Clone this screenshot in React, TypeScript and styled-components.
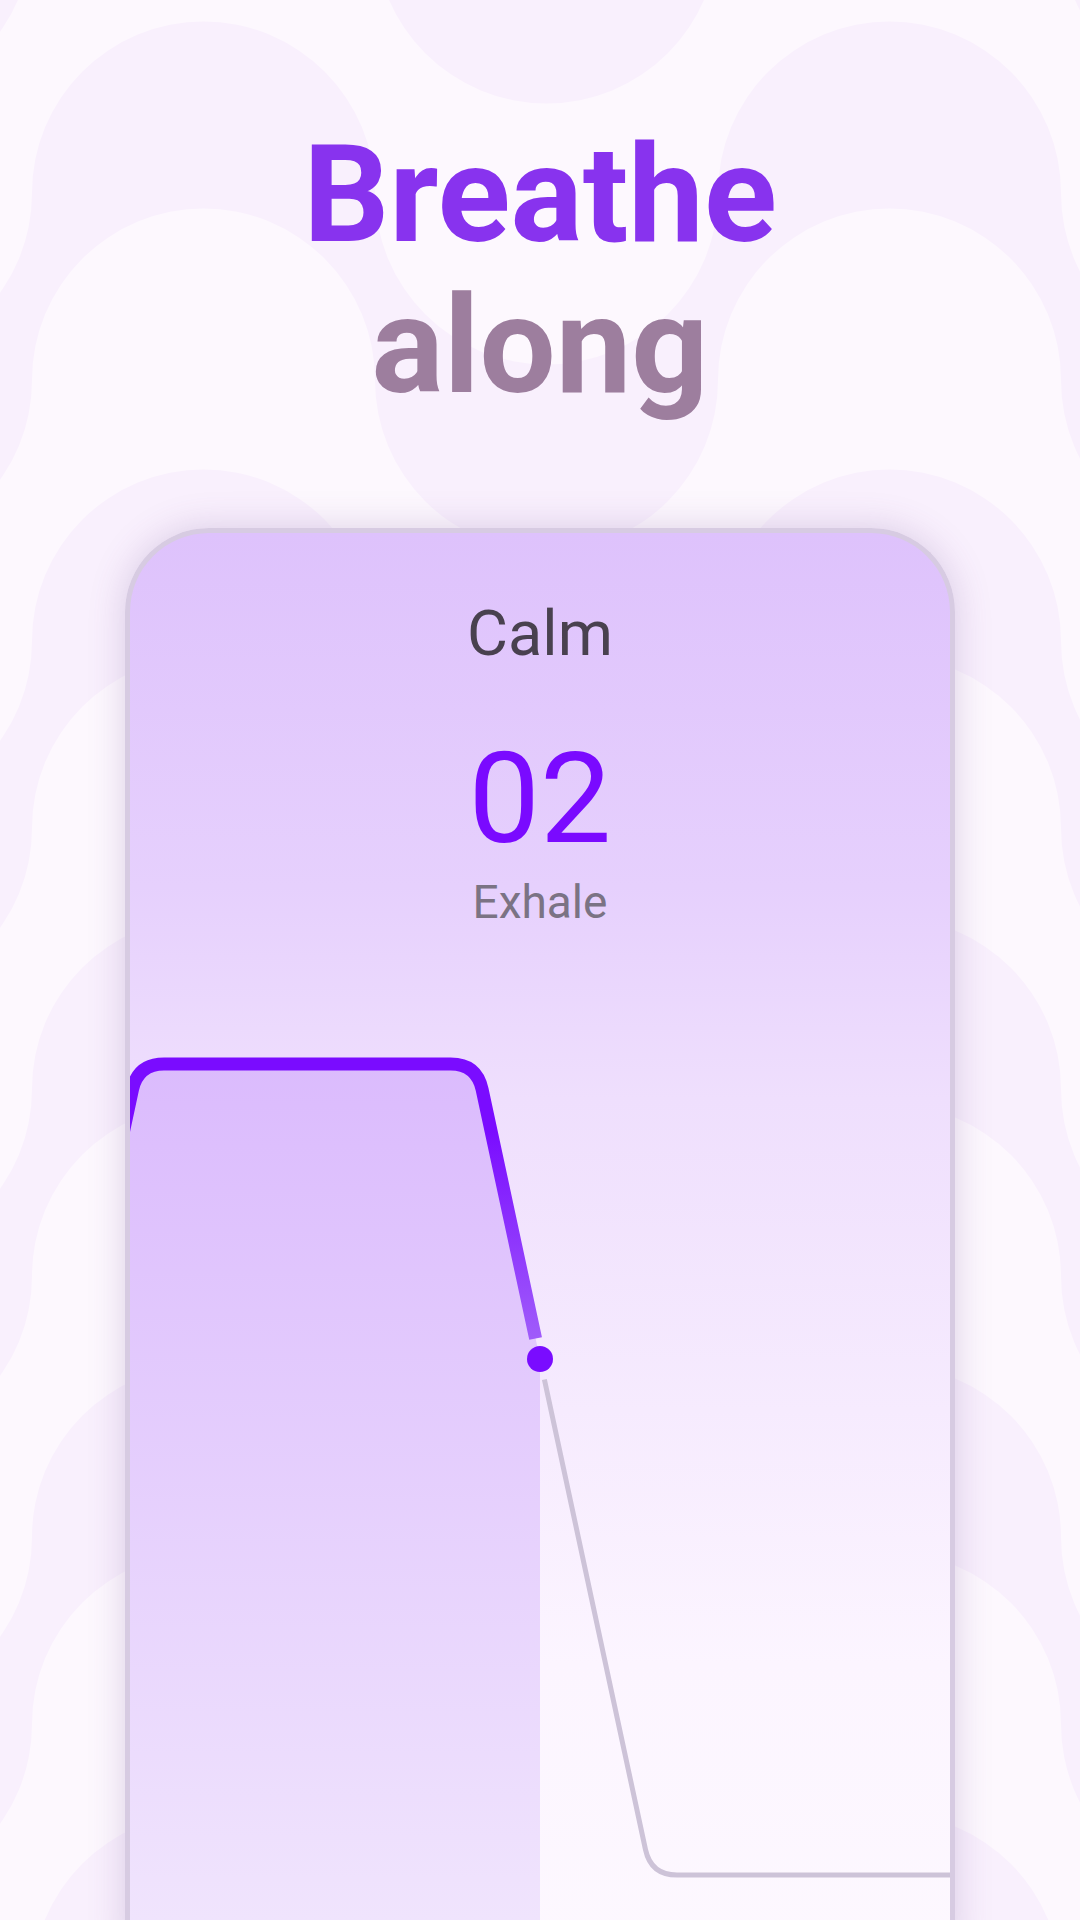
import styled, { createGlobalStyle } from 'styled-components'

const GlobalStyle = createGlobalStyle`
  html, body {
    margin: 0;
    padding: 0;
  }
  body {
    background: #fdf8fe;
    font-family: Roboto, 'Noto Sans', sans-serif;
  }
`

const Page = styled.main`
  position: relative;
  width: 1080px;
  height: 1920px;
  overflow: hidden;
  background: #fdf8fe;
`

const Backdrop = styled.svg`
  position: absolute;
  inset: 0;
  width: 100%;
  height: 100%;
`

const Content = styled.div`
  position: relative;
  z-index: 1;
  display: flex;
  flex-direction: column;
  align-items: center;
  padding-top: 120px;
`

const Title = styled.h1`
  margin: 0;
  font-size: 135px;
  line-height: 151px;
  font-weight: 700;
  text-align: center;
`

const TitleLine = styled.span<{ $tone: 'accent' | 'muted' }>`
  display: block;
  color: ${p => (p.$tone === 'accent' ? '#8833ee' : '#9d7e9e')};
`

const Card = styled.section`
  margin-top: 106px;
  width: 830px;
  height: 1420px;
  flex-shrink: 0;
  box-sizing: border-box;
  border: 5px solid #d7cbe2;
  border-bottom: none;
  border-radius: 84px 84px 0 0;
  background: linear-gradient(
    180deg,
    #dec2fc 0%,
    #e6d0fd 25%,
    #efdffd 40%,
    #f6ebfe 62%,
    #fcf5ff 80%,
    #fdf8ff 100%
  );
  box-shadow: 0 0 36px rgba(105, 70, 140, 0.22);
  overflow: hidden;
  display: flex;
  flex-direction: column;
  align-items: center;
  padding-top: 69px;
`

const Mode = styled.div`
  font-size: 63px;
  line-height: 63px;
  color: #49414f;
`

const Count = styled.div`
  margin-top: 70px;
  font-size: 127px;
  line-height: 127px;
  color: #7a0aff;
`

const Phase = styled.div`
  margin-top: 17px;
  font-size: 46px;
  line-height: 46px;
  color: #7b7384;
`

const Chart = styled.svg`
  display: block;
  flex-shrink: 0;
  margin-top: 55px;
`

// wave bands in the backdrop: semicircle arcs, up over x=203/889, down over x=546
const R = 171.5
const junctions = [-311, 32, 375, 718, 1061, 1404]

const band = (y1: number, y2: number) => {
  let d = `M ${junctions[0]} ${y1}`
  for (let i = 0; i < junctions.length - 1; i++) {
    const up = i % 2 === 1
    d += ` A ${R} ${R} 0 0 ${up ? 1 : 0} ${junctions[i + 1]} ${y1}`
  }
  d += ` L ${junctions[junctions.length - 1]} ${y2}`
  for (let i = junctions.length - 2; i >= 0; i--) {
    const up = i % 2 === 1
    d += ` A ${R} ${R} 0 0 ${up ? 0 : 1} ${junctions[i]} ${y2}`
  }
  return d + ' Z'
}

const bands = [-1, 0, 1, 2, 3, 4].map(n => band(193 + 448 * n, 380 + 448 * n))

const curve =
  'M -166 895 L 2.5 109.4 Q 8 84 34 84 L 320.6 84 Q 346.6 84 352.1 109.4'
const done = curve + ' L 405.6 358.5'
const fill = curve + ' L 410 379 L 410 960 L -166 960 Z'
const rest = 'M 414.4 399.5 L 515.5 869.6 Q 521 895 547 895 L 900 895'

export default function App() {
  return (
    <>
      <GlobalStyle />
      <Page>
        <Backdrop viewBox="0 0 1080 1920">
          {bands.map((d, i) => (
            <path key={i} d={d} fill="#f9f0fd" />
          ))}
        </Backdrop>
        <Content>
          <Title>
            <TitleLine $tone="accent">Breathe</TitleLine>
            <TitleLine $tone="muted">along</TitleLine>
          </Title>
          <Card>
            <Mode>Calm</Mode>
            <Count>02</Count>
            <Phase>Exhale</Phase>
            <Chart width="820" height="960" viewBox="0 0 820 960">
              <defs>
                <linearGradient id="area" gradientUnits="userSpaceOnUse" x1="0" y1="84" x2="0" y2="940">
                  <stop offset="0" stopColor="#dbbbfd" />
                  <stop offset="1" stopColor="#f0e4fd" />
                </linearGradient>
                <linearGradient id="line" gradientUnits="userSpaceOnUse" x1="0" y1="150" x2="0" y2="360">
                  <stop offset="0" stopColor="#7a0cff" />
                  <stop offset="1" stopColor="#a05cfa" />
                </linearGradient>
              </defs>
              <path d={fill} fill="url(#area)" />
              <path d={rest} fill="none" stroke="#cdc3d8" strokeWidth="5" />
              <path d={done} fill="none" stroke="url(#line)" strokeWidth="13" />
              <circle cx="410" cy="379" r="13" fill="#7a0cff" />
            </Chart>
          </Card>
        </Content>
      </Page>
    </>
  )
}
